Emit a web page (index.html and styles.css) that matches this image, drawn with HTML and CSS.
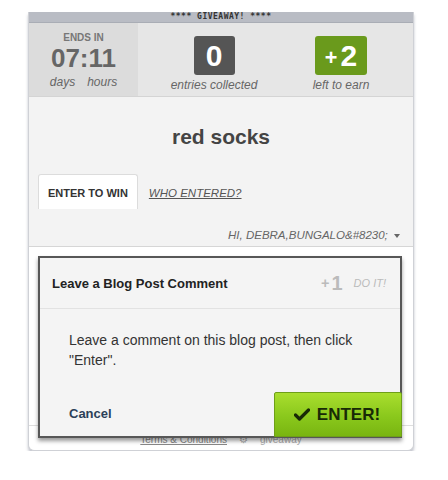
FILE: index.html
```html
<!DOCTYPE html>
<html lang="en">

<head>
  <meta charset="UTF-8">
  <meta name="viewport" content="width=device-width, initial-scale=1.0">
  <title>Giveaway | red socks</title>
  <link rel="stylesheet" href="styles.css">
</head>

<body>

  <div class="widget">
    <div class="topbar">**** GIVEAWAY! ****</div>

    <!-- Countdown and entry counters -->
    <div class="stats">
      <div class="ends">
        <div class="ends-label">ENDS IN</div>
        <div class="ends-time">07:11</div>
        <div class="ends-units"><span>days</span><span>hours</span></div>
      </div>
      <div class="stat collected">
        <div class="stat-box dark">0</div>
        <div class="stat-label">entries collected</div>
      </div>
      <div class="stat earn">
        <div class="stat-box green"><span class="plus">+</span>2</div>
        <div class="stat-label">left to earn</div>
      </div>
    </div>

    <h1 class="prize">red socks</h1>

    <div class="tabs">
      <div class="tab active">ENTER TO WIN</div>
      <a class="tab-link" href="#">WHO ENTERED?</a>
    </div>

    <div class="user-row">HI, DEBRA,BUNGALO&amp;#8230; <span class="caret"></span></div>

    <div class="entries"></div>

    <footer class="widget-footer">
      <a href="#">Terms &amp; Conditions</a>
      <span class="gear">&#9881;</span>
      <span>giveaway</span>
    </footer>

    <!-- Entry popup -->
    <div class="modal">
      <div class="modal-head">
        <h3>Leave a Blog Post Comment</h3>
        <span class="points"><span class="plus">+</span>1</span>
        <span class="do-it">DO IT!</span>
      </div>
      <p class="modal-text">Leave a comment on this blog post, then click "Enter".</p>
      <div class="modal-foot">
        <a class="cancel" href="#">Cancel</a>
        <button class="enter-btn">
          <svg width="16" height="13" viewBox="0 0 16 13"><path d="M1.5 7 L5.5 11 L14.5 2" fill="none" stroke="#182a06" stroke-width="3.2" stroke-linecap="round" stroke-linejoin="round"/></svg>
          ENTER!
        </button>
      </div>
    </div>
  </div>

</body>

</html>
```

FILE: styles.css
```css
body {
  margin: 0;
  background: #fff;
  font-family: "Liberation Sans", Arial, sans-serif;
  color: #333;
}

.widget {
  position: relative;
  width: 384px;
  margin: 12px 0 0 28px;
  border: 1px solid #cfd1d6;
  border-top: none;
  border-radius: 0 0 6px 6px;
  background: #f3f3f3;
  box-shadow: 0 3px 3px rgba(80, 85, 110, 0.35);
}

.topbar {
  height: 10px;
  background: #b9bcc4;
  border-bottom: 1px solid #a9adb5;
  font-family: "DejaVu Sans Mono", monospace;
  font-size: 8px;
  font-weight: bold;
  line-height: 10px;
  letter-spacing: 0.5px;
  text-align: center;
  color: #333;
}

/* Counters */
.stats {
  display: flex;
  height: 73px;
  background: #e6e6e6;
  border-bottom: 1px solid #d4d4d4;
}

.ends {
  width: 109px;
  background: #dcdcdc;
  text-align: center;
  color: #6d6d6d;
}

.ends-label {
  margin-top: 9px;
  font-size: 10px;
  font-weight: bold;
  color: #777;
}

.ends-time {
  margin-top: 1px;
  font-size: 26px;
  font-weight: bold;
  line-height: 28px;
  color: #666;
}

.ends-units {
  display: flex;
  justify-content: center;
  gap: 12px;
  margin-top: 3px;
  font-size: 12px;
  font-style: italic;
  color: #666;
}

.stat {
  display: flex;
  flex-direction: column;
  align-items: center;
  padding-top: 13px;
}

.stat.collected {
  width: 152px;
}

.stat.earn {
  width: 102px;
}

.stat-box {
  height: 39px;
  padding: 0 10px;
  min-width: 21px;
  border-radius: 3px;
  color: #fff;
  font-size: 30px;
  font-weight: bold;
  line-height: 39px;
  text-align: center;
}

.stat-box.dark {
  background: #555;
}

.stat-box.green {
  background: #6a9a1c;
  padding: 0 10px;
}

.plus {
  display: inline-block;
  margin-right: 3px;
  font-size: 0.72em;
  vertical-align: top;
  position: relative;
  top: 2px;
}

.stat-label {
  margin-top: 3px;
  font-size: 12px;
  font-style: italic;
  color: #666;
}

.prize {
  margin: 0;
  height: 77px;
  font-size: 21px;
  line-height: 80px;
  text-align: center;
  color: #444;
}

/* Tabs */
.tabs {
  display: flex;
  align-items: center;
  gap: 11px;
  padding-left: 9px;
}

.tab {
  padding: 0 9px;
  height: 34px;
  line-height: 36px;
  background: #fff;
  border: 1px solid #dcdcdc;
  border-bottom: none;
  border-radius: 3px 3px 0 0;
  font-size: 11px;
  font-weight: bold;
  color: #333;
}

.tab-link {
  font-size: 11.5px;
  font-style: italic;
  color: #555;
  padding-top: 3px;
}

.user-row {
  height: 37px;
  padding-right: 13px;
  border-bottom: 1px solid #d6d6d6;
  text-align: right;
  font-size: 11.5px;
  font-style: italic;
  line-height: 52px;
  color: #666;
}

.caret {
  display: inline-block;
  margin-left: 3px;
  border-left: 3px solid transparent;
  border-right: 3px solid transparent;
  border-top: 4px solid #666;
  vertical-align: middle;
}

.entries {
  height: 178px;
  background: #fff;
  border-bottom: 1px solid #dedede;
}

.widget-footer {
  display: flex;
  justify-content: center;
  gap: 12px;
  height: 24px;
  line-height: 28px;
  font-size: 10px;
  color: #aaa;
  background: #fff;
  border-radius: 0 0 6px 6px;
}

.widget-footer a {
  color: #888;
}

/* Popup */
.modal {
  position: absolute;
  top: 244px;
  left: 9px;
  width: 360px;
  height: 178px;
  border: 2px solid #575757;
  background: #f4f4f4;
  box-shadow: 0 3px 4px rgba(0, 0, 0, 0.4);
  display: flex;
  flex-direction: column;
}

.modal-head {
  display: flex;
  align-items: center;
  height: 50px;
  padding: 0 14px 0 12px;
  border-bottom: 1px solid #e2e2e2;
}

.modal-head h3 {
  flex: 1;
  margin: 0;
  font-size: 13px;
  color: #222;
}

.points {
  margin-right: -3px;
  font-size: 20px;
  font-weight: bold;
  color: #bbb;
}

.points .plus {
  margin-right: 2px;
  top: 3px;
}

.do-it {
  margin-left: 14px;
  font-size: 11px;
  font-style: italic;
  color: #bbb;
}

.modal-text {
  margin: 21px 30px 0 29px;
  font-size: 14px;
  line-height: 20px;
  color: #333;
}

.modal-foot {
  margin-top: auto;
  display: flex;
  align-items: center;
  justify-content: space-between;
  margin-right: -2px;
  margin-bottom: -1px;
}

.cancel {
  margin-left: 29px;
  margin-top: -2px;
  font-size: 13px;
  font-weight: bold;
  color: #2b3f58;
  text-decoration: none;
}

.enter-btn {
  display: flex;
  align-items: center;
  justify-content: center;
  gap: 7px;
  width: 128px;
  height: 45px;
  border: 1px solid #6e9f18;
  border-radius: 2px 2px 0 0;
  background: linear-gradient(to bottom, #a9de2e, #8ac81c 55%, #79b511);
  font-family: "Liberation Sans", Arial, sans-serif;
  font-size: 17px;
  font-weight: bold;
  color: #182a06;
  cursor: pointer;
  padding: 0 2px 0 0;
}
```
